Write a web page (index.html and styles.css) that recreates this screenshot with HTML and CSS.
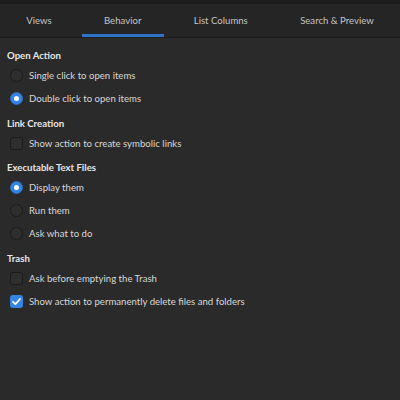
FILE: index.html
```html
<!DOCTYPE html>
<html>
<head>
<meta charset="utf-8">
<link rel="stylesheet" href="styles.css">
</head>
<body>
<div class="window">
  <div class="topstrip"></div>
  <div class="tabs">
    <div class="tab">Views</div>
    <div class="tab active">Behavior</div>
    <div class="tab">List Columns</div>
    <div class="tab">Search &amp; Preview</div>
  </div>
  <div class="content">
    <div class="section">
      <div class="heading">Open Action</div>
      <div class="row"><span class="radio"></span>Single click to open items</div>
      <div class="row"><span class="radio on"></span>Double click to open items</div>
    </div>
    <div class="section">
      <div class="heading">Link Creation</div>
      <div class="row"><span class="check"></span>Show action to create symbolic links</div>
    </div>
    <div class="section">
      <div class="heading">Executable Text Files</div>
      <div class="row"><span class="radio on"></span>Display them</div>
      <div class="row"><span class="radio"></span>Run them</div>
      <div class="row"><span class="radio"></span>Ask what to do</div>
    </div>
    <div class="section">
      <div class="heading">Trash</div>
      <div class="row"><span class="check"></span>Ask before emptying the Trash</div>
      <div class="row"><span class="check on"><svg width="13" height="13" viewBox="0 0 13 13"><path d="M3 6.8 L5.4 9.1 L10 4" fill="none" stroke="#fff" stroke-width="1.8" stroke-linecap="round" stroke-linejoin="round"/></svg></span>Show action to permanently delete files and folders</div>
    </div>
  </div>
</div>
</body>
</html>
```
FILE: styles.css
```css
html, body {
  margin: 0;
  padding: 0;
  background: #2a2a2a;
}
.window {
  width: 400px;
  height: 400px;
  background: #2a2a2a;
  font-family: Lato, "Noto Sans", sans-serif;
  font-size: 9.6px;
  color: #d8d8d8;
  display: flex;
  flex-direction: column;
}
.topstrip {
  height: 4px;
  background: #1d1d1d;
}
.tabs {
  display: flex;
  height: 33px;
  background: #252525;
  border-bottom: 1px solid #1c1c1c;
}
.tab {
  flex: 1 1 auto;
  display: flex;
  align-items: center;
  justify-content: center;
  padding: 0 26px;
  position: relative;
  color: #c4c4c4;
  white-space: nowrap;
}
.tab.active::after {
  content: "";
  position: absolute;
  left: 4px;
  right: 4px;
  bottom: 0;
  height: 3px;
  background: #2f73c9;
}
.content {
  padding: 9px 7px 0 7px;
  display: flex;
  flex-direction: column;
}
.section {
  display: flex;
  flex-direction: column;
  margin-bottom: 4.7px;
}
.heading {
  font-weight: bold;
  color: #e6e6e6;
  height: 17px;
  line-height: 17px;
}
.row {
  display: flex;
  align-items: center;
  height: 23px;
  gap: 6px;
  padding-left: 3px;
  white-space: nowrap;
}
.radio {
  width: 13px;
  height: 13px;
  box-sizing: border-box;
  border-radius: 50%;
  background: #2e2e2e;
  border: 1px solid #1a1a1a;
  flex: none;
  display: flex;
  align-items: center;
  justify-content: center;
}
.radio.on {
  background: #3584e4;
  border-color: #2a6fc4;
}
.radio.on::after {
  content: "";
  width: 5px;
  height: 5px;
  border-radius: 50%;
  background: #fff;
}
.check {
  width: 13px;
  height: 13px;
  box-sizing: border-box;
  border-radius: 3px;
  background: #2e2e2e;
  border: 1px solid #1a1a1a;
  flex: none;
  display: flex;
}
.check.on {
  background: #3584e4;
  border: none;
}
```
